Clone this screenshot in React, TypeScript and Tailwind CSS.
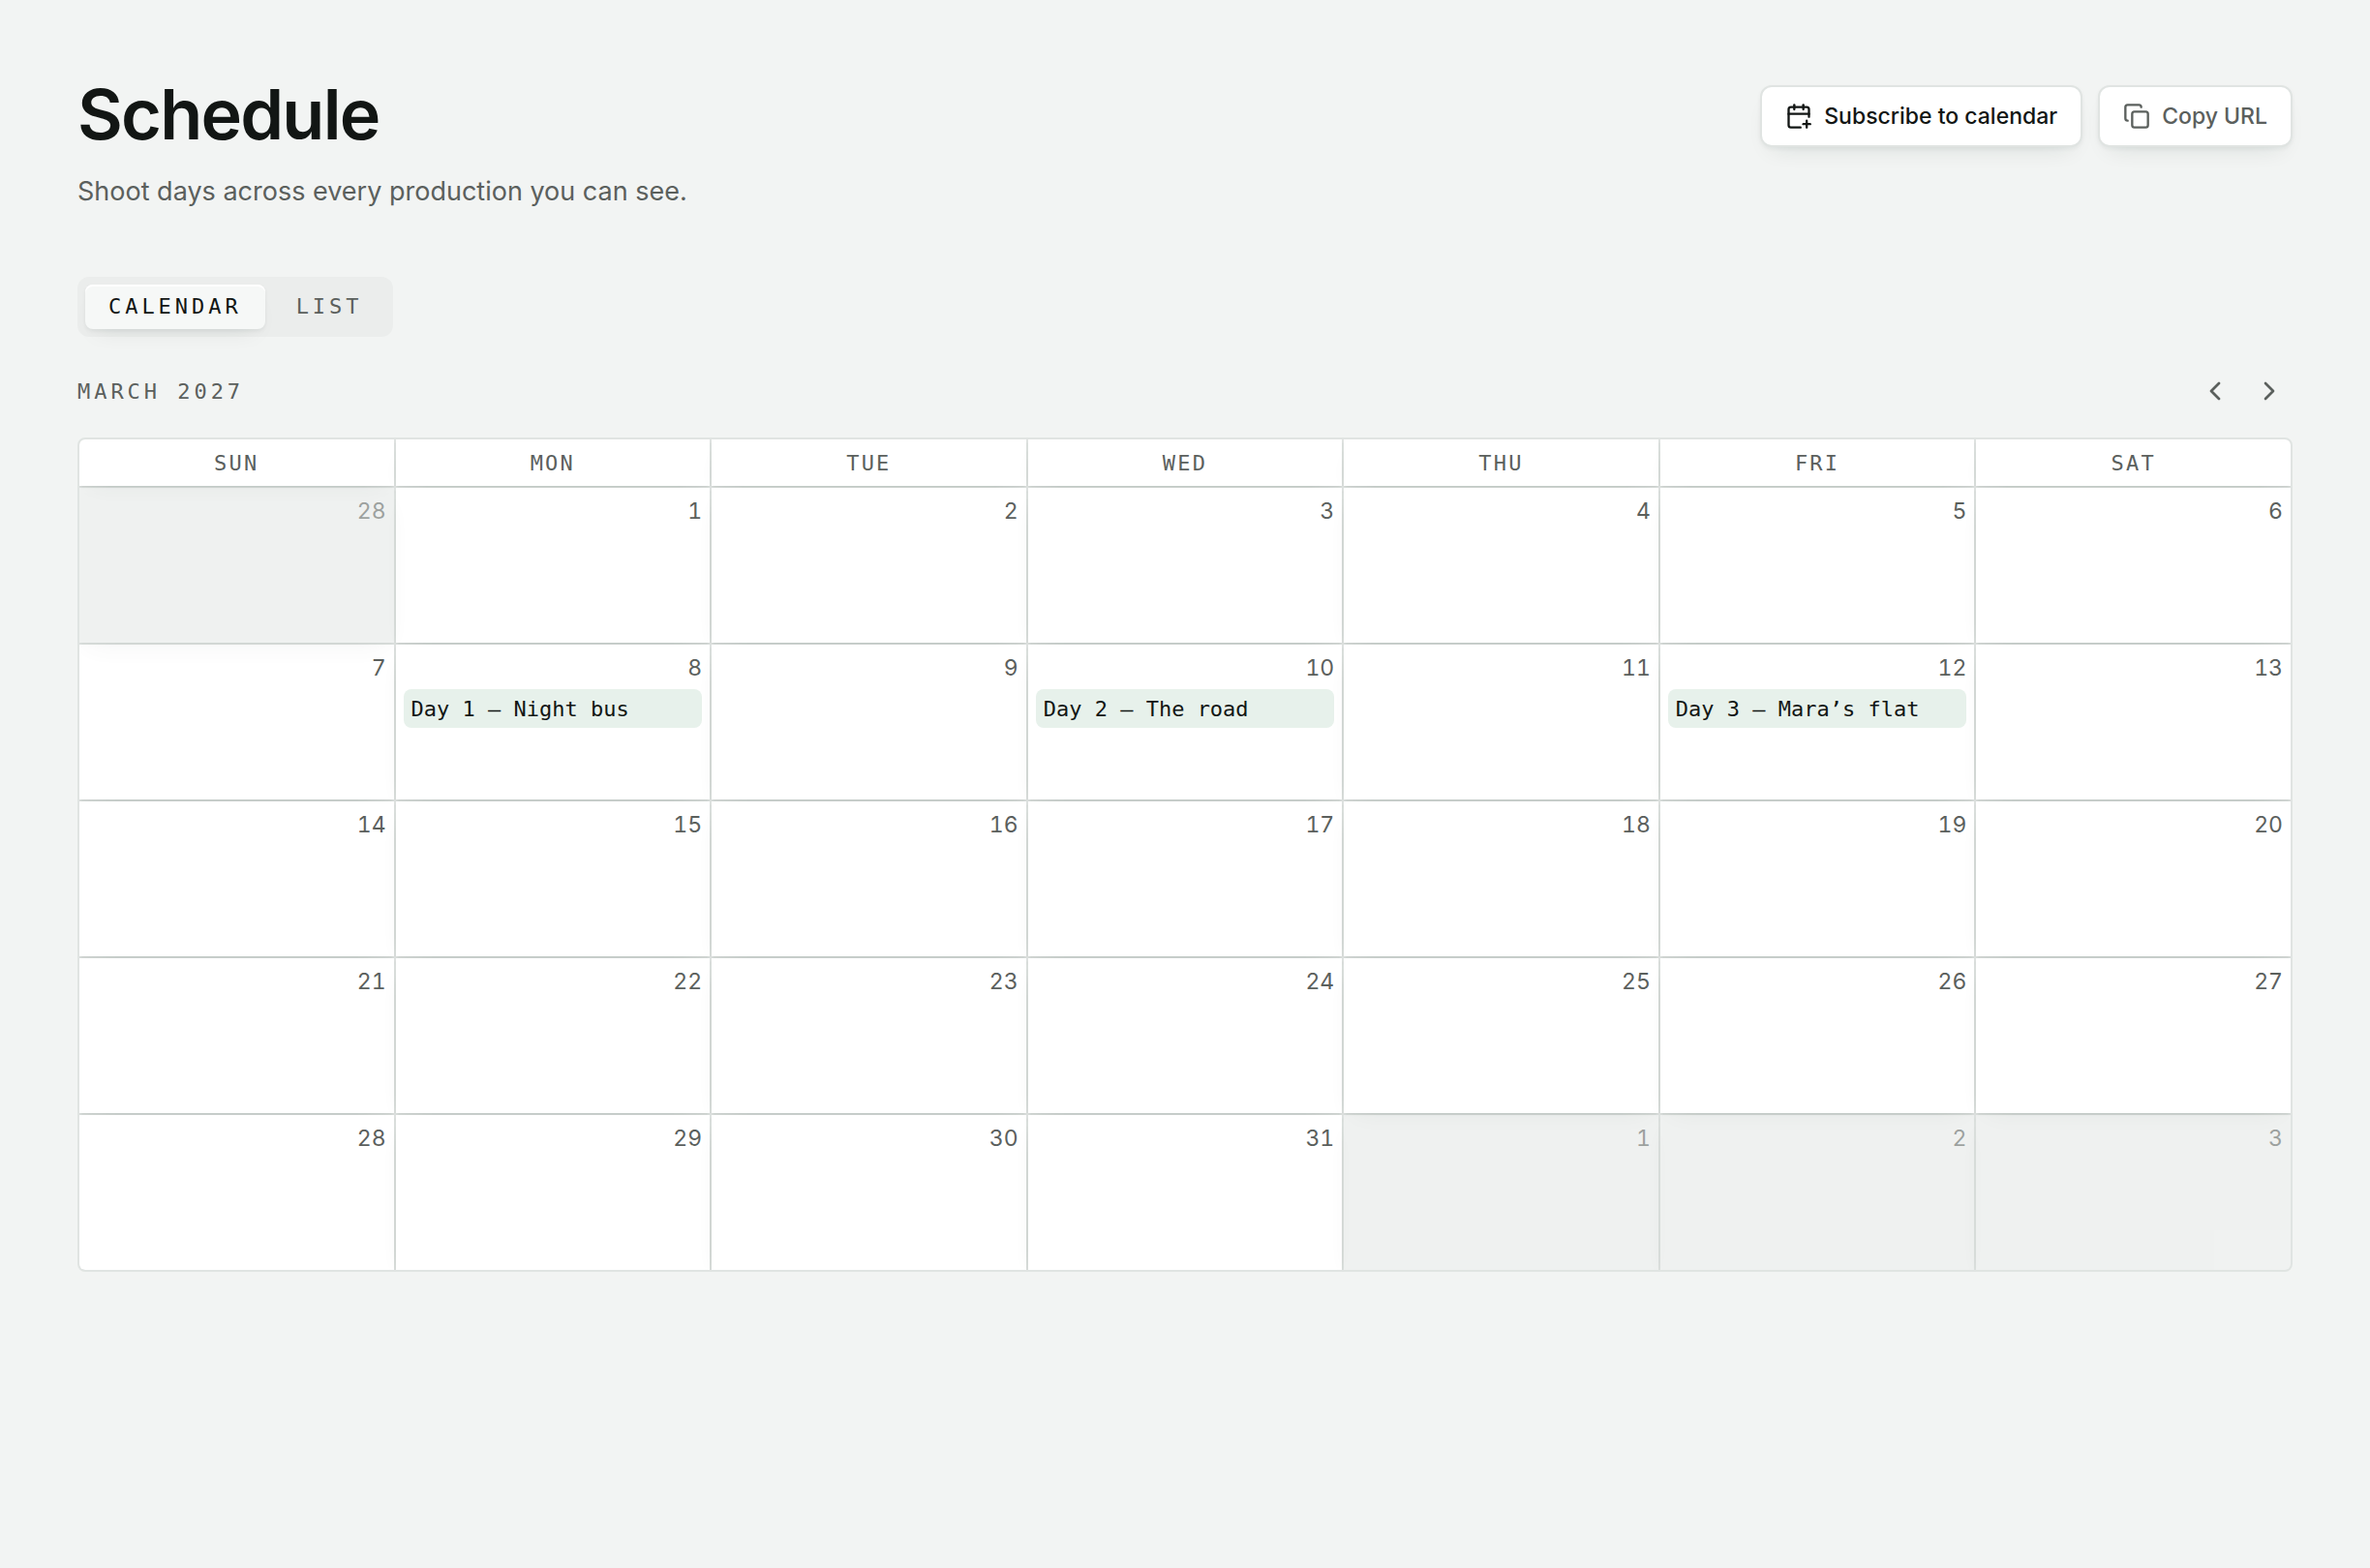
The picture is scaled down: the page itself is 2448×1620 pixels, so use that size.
import React from 'react';
import { CalendarPlus, ChevronLeft, ChevronRight, Copy } from 'lucide-react';
import clsx from 'clsx';

interface Day {
  date: number;
  outside?: boolean;
  event?: string;
}

const weekdays = ['Sun', 'Mon', 'Tue', 'Wed', 'Thu', 'Fri', 'Sat'];

const shootDays: Record<number, string> = {
  8: 'Day 1 — Night bus',
  10: 'Day 2 — The road',
  12: 'Day 3 — Mara’s flat',
};

const days: Day[] = [
  { date: 28, outside: true },
  ...Array.from({ length: 31 }, (_, i) => ({ date: i + 1, event: shootDays[i + 1] })),
  { date: 1, outside: true },
  { date: 2, outside: true },
  { date: 3, outside: true },
];

const weeks = Array.from({ length: 5 }, (_, i) => days.slice(i * 7, i * 7 + 7));

const mono = "font-['DejaVu_Sans_Mono',monospace]";
const raised = 'shadow-[0_2px_4px_rgba(20,40,30,0.05),0_12px_24px_-12px_rgba(20,40,30,0.12)]';
const cellShadow = 'shadow-[0_2px_3px_-1px_rgba(20,40,30,0.14),0_10px_24px_-12px_rgba(20,40,30,0.12)]';

function ActionButton({ children, className }: { children: React.ReactNode; className?: string }) {
  return (
    <button
      type="button"
      className={clsx(
        'flex h-16 items-center gap-3 rounded-xl border-2 border-[#e0e4e2] bg-white px-6 text-[23px] font-medium whitespace-nowrap',
        raised,
        className,
      )}
    >
      {children}
    </button>
  );
}

function DayCell({ day }: { day: Day }) {
  return (
    <td
      className={clsx(
        'h-[160px] bg-white p-2 align-top',
        cellShadow,
        day.outside && 'opacity-50',
      )}
    >
      <div className="text-right text-[23px] leading-8 text-[#5b605d] tabular-nums">{day.date}</div>
      {day.event && (
        <button
          type="button"
          className={clsx('mt-1.5 block h-10 w-full truncate rounded-lg bg-[#e7f1eb] px-2 text-left text-[22px] text-[#121614]', mono)}
        >
          {day.event}
        </button>
      )}
    </td>
  );
}

export default function App() {
  return (
    <main className="min-h-screen bg-[#f2f4f3] px-20 pt-[88px] pb-20 font-['Inter',sans-serif] text-[#121614]">
      {/* Page heading */}
      <header className="flex items-start justify-between">
        <div>
          <h1 className="text-[72px] leading-[60px] font-semibold tracking-tight">Schedule</h1>
          <p className="mt-7 text-[27px] leading-[44px] text-[#5b605d]">
            Shoot days across every production you can see.
          </p>
        </div>
        <div className="flex gap-4">
          <ActionButton>
            <CalendarPlus size={28} />
            Subscribe to calendar
          </ActionButton>
          <ActionButton className="text-[#5b605d]">
            <Copy size={28} />
            Copy URL
          </ActionButton>
        </div>
      </header>

      {/* View switch */}
      <div className={clsx('mt-[66px] inline-flex gap-2 rounded-xl bg-[#ebedec] p-2 text-[22px] tracking-[0.18em] uppercase', mono)}>
        <button
          type="button"
          aria-pressed="true"
          className="h-[46px] rounded-lg bg-[#f6f8f7] px-6 pb-0.5 uppercase shadow-[inset_0_2px_0_#fff,0_2px_4px_rgba(20,40,30,0.06),0_12px_24px_-12px_rgba(20,40,30,0.1)]"
        >
          Calendar
        </button>
        <button type="button" aria-pressed="false" className="h-[46px] px-6 pb-0.5 text-[#5b605d] uppercase">
          List
        </button>
      </div>

      {/* Month navigation */}
      <div className="mt-8 flex h-12 items-center justify-between text-[#5b605d]">
        <h2 className={clsx('text-[22px] tracking-[0.18em] uppercase', mono)}>March 2027</h2>
        <div className="flex gap-2">
          <button type="button" aria-label="Previous month" className="flex size-12 items-center justify-center">
            <ChevronLeft size={32} />
          </button>
          <button type="button" aria-label="Next month" className="flex size-12 items-center justify-center">
            <ChevronRight size={32} />
          </button>
        </div>
      </div>

      <div className="mt-6 overflow-hidden rounded-lg border-2 border-[#e0e4e2] bg-[#e0e4e2]">
        <table className="-m-0.5 w-[calc(100%+4px)] table-fixed border-separate border-spacing-0.5">
          <thead>
            <tr>
              {weekdays.map((name) => (
                <th
                  key={name}
                  scope="col"
                  className={clsx('h-12 bg-white p-0 text-[22px] font-normal tracking-widest text-[#5b605d] uppercase', cellShadow, mono)}
                >
                  {name}
                </th>
              ))}
            </tr>
          </thead>
          <tbody>
            {weeks.map((week, i) => (
              <tr key={i}>
                {week.map((day) => (
                  <DayCell key={day.date} day={day} />
                ))}
              </tr>
            ))}
          </tbody>
        </table>
      </div>
    </main>
  );
}
